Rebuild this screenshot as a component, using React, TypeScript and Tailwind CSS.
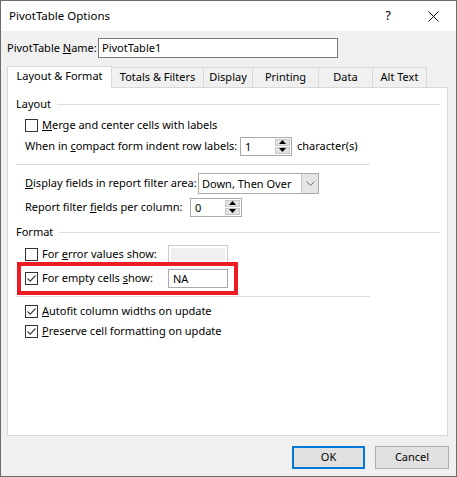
import React from "react";

function CheckBox({ checked }: { checked?: boolean }) {
  return (
    <span className="w-[13px] h-[13px] border border-[#333333] bg-white flex items-center justify-center shrink-0">
      {checked && (
        <svg width="11" height="11" viewBox="0 0 11 11">
          <path d="M1.5 5.5 L4.2 8.2 L9.5 2.5" fill="none" stroke="#404040" strokeWidth="1.2" />
        </svg>
      )}
    </span>
  );
}

function Spinner({ value }: { value: string }) {
  return (
    <div className="h-[19px] w-[52px] border border-[#a9a9a9] bg-white flex p-px shrink-0">
      <span className="flex-1 pl-[3px] leading-[15px]">{value}</span>
      <div className="w-[15px] flex flex-col gap-px">
        <div className="flex-1 bg-[#e1e1e1] border border-[#c8c8c8] flex items-center justify-center">
          <svg width="7" height="4" viewBox="0 0 7 4">
            <path d="M0 4 L3.5 0 L7 4 Z" fill="#000" />
          </svg>
        </div>
        <div className="flex-1 bg-[#e1e1e1] border border-[#c8c8c8] flex items-center justify-center">
          <svg width="7" height="4" viewBox="0 0 7 4">
            <path d="M0 0 L3.5 4 L7 0 Z" fill="#000" />
          </svg>
        </div>
      </div>
    </div>
  );
}

function Header({ text }: { text: string }) {
  return (
    <div className="h-[16px] flex items-center pl-[8px] pr-[7px] gap-[6px]">
      <span>{text}</span>
      <div className="flex-1 h-px bg-[#dcdcdc]" />
    </div>
  );
}

const tabs = [
  { label: "Totals & Filters", w: "w-[93px]" },
  { label: "Display", w: "w-[50px]" },
  { label: "Printing", w: "w-[67px]" },
  { label: "Data", w: "w-[55px]" },
  { label: "Alt Text", w: "w-[55px]" },
];

export default function App() {
  return (
    <div className="w-[457px] h-[477px] border border-[#6b6b6b] bg-[#f0f0f0] flex flex-col font-['Noto_Sans',sans-serif] text-[11px] text-black">
      {/* title bar */}
      <div className="h-[30px] bg-white flex items-center pl-[8px] shrink-0">
        <span className="text-[11.5px]">PivotTable Options</span>
        <span className="ml-auto mr-[37px] text-[13px]">?</span>
        <svg className="mr-[17px]" width="11" height="11" viewBox="0 0 11 11">
          <path d="M0.5 0.5 L10.5 10.5 M10.5 0.5 L0.5 10.5" stroke="#000" strokeWidth="1" />
        </svg>
      </div>

      <div className="flex-1 px-[6px] flex flex-col">
        {/* name */}
        <div className="mt-[7px] h-[20px] flex items-center">
          <span className="w-[91px] whitespace-nowrap">
            PivotTable <u>N</u>ame:
          </span>
          <div className="w-[240px] h-[20px] border border-[#7a7a7a] bg-white pl-[3px] leading-[18px]">
            PivotTable1
          </div>
        </div>

        {/* tabs */}
        <div className="mt-[8px] flex items-end h-[22px] relative z-10">
          <div className="w-[105px] h-[22px] bg-white border border-b-0 border-[#d9d9d9] flex items-center justify-center pb-[2px]">
            Layout &amp; Format
          </div>
          {tabs.map((t) => (
            <div
              key={t.label}
              className={`${t.w} -ml-px h-[20px] mb-px border border-b-0 border-[#d9d9d9] bg-[#f0f0f0] flex items-center justify-center`}
            >
              {t.label}
            </div>
          ))}
        </div>

        {/* panel */}
        <div className="-mt-px w-[441px] h-[349px] bg-white border border-[#d9d9d9] flex flex-col">
          <div className="mt-[8px]">
            <Header text="Layout" />
          </div>

          <div className="mt-[3px] h-[20px] pl-[17px] flex items-center gap-[4px]">
            <CheckBox />
            <span>
              <u>M</u>erge and center cells with labels
            </span>
          </div>

          <div className="mt-[1px] h-[20px] pl-[17px] flex items-center">
            <span className="w-[215px] whitespace-nowrap">
              When in <u>c</u>ompact form indent row labels:
            </span>
            <Spinner value="1" />
            <span className="ml-[5px]">character(s)</span>
          </div>

          <div className="mt-[8px] ml-[8px] w-[354px] h-px bg-[#dcdcdc]" />

          <div className="mt-[7px] h-[22px] pl-[17px] flex items-center">
            <span className="w-[173px] whitespace-nowrap">
              <u>D</u>isplay fields in report filter area:
            </span>
            <div className="w-[121px] h-[21px] border border-[#a9a9a9] bg-white flex">
              <span className="flex-1 pl-[3px] leading-[19px]">Down, Then Over</span>
              <div className="w-[17px] bg-[#e5e5e5] border-l border-[#c8c8c8] flex items-center justify-center">
                <svg width="9" height="5" viewBox="0 0 9 5">
                  <path d="M0.5 0.5 L4.5 4.5 L8.5 0.5" fill="none" stroke="#707070" strokeWidth="1" />
                </svg>
              </div>
            </div>
          </div>

          <div className="mt-[3px] h-[20px] pl-[17px] flex items-center">
            <span className="w-[165px] whitespace-nowrap">
              Report filter <u>f</u>ields per column:
            </span>
            <Spinner value="0" />
          </div>

          <div className="mt-[7px]">
            <Header text="Format" />
          </div>

          <div className="mt-[4px] h-[20px] pl-[17px] flex items-center">
            <CheckBox />
            <span className="ml-[4px] w-[126px] whitespace-nowrap">
              For <u>e</u>rror values show:
            </span>
            <div className="w-[60px] h-[19px] border border-[#cccccc] bg-white p-[2px]">
              <div className="w-full h-full bg-[#f0f0f0]" />
            </div>
          </div>

          <div className="mt-[4px] h-[20px] pl-[17px] flex items-center relative">
            <div className="absolute left-[9px] top-[-6px] w-[221px] h-[33px] border-[4px] border-[#ed1c24]" />
            <CheckBox checked />
            <span className="ml-[4px] w-[126px] whitespace-nowrap">
              For empty cells <u>s</u>how:
            </span>
            <div className="w-[60px] h-[19px] border border-[#a9a9a9] bg-white pl-[4px] leading-[17px]">
              NA
            </div>
          </div>

          <div className="mt-[8px] ml-[8px] w-[354px] h-px bg-[#dcdcdc]" />

          <div className="mt-[5px] h-[19px] pl-[17px] flex items-center gap-[4px]">
            <CheckBox checked />
            <span>
              <u>A</u>utofit column widths on update
            </span>
          </div>

          <div className="h-[20px] pl-[17px] flex items-center gap-[4px]">
            <CheckBox checked />
            <span>
              <u>P</u>reserve cell formatting on update
            </span>
          </div>
        </div>

        {/* buttons */}
        <div className="mt-[10px] flex justify-end gap-[10px] pr-[1px]">
          <button className="w-[73px] h-[23px] bg-[#e1e1e1] border-2 border-[#0078d7] flex items-center justify-center">
            OK
          </button>
          <button className="w-[74px] h-[23px] bg-[#e1e1e1] border border-[#adadad] flex items-center justify-center">
            Cancel
          </button>
        </div>
      </div>
    </div>
  );
}
